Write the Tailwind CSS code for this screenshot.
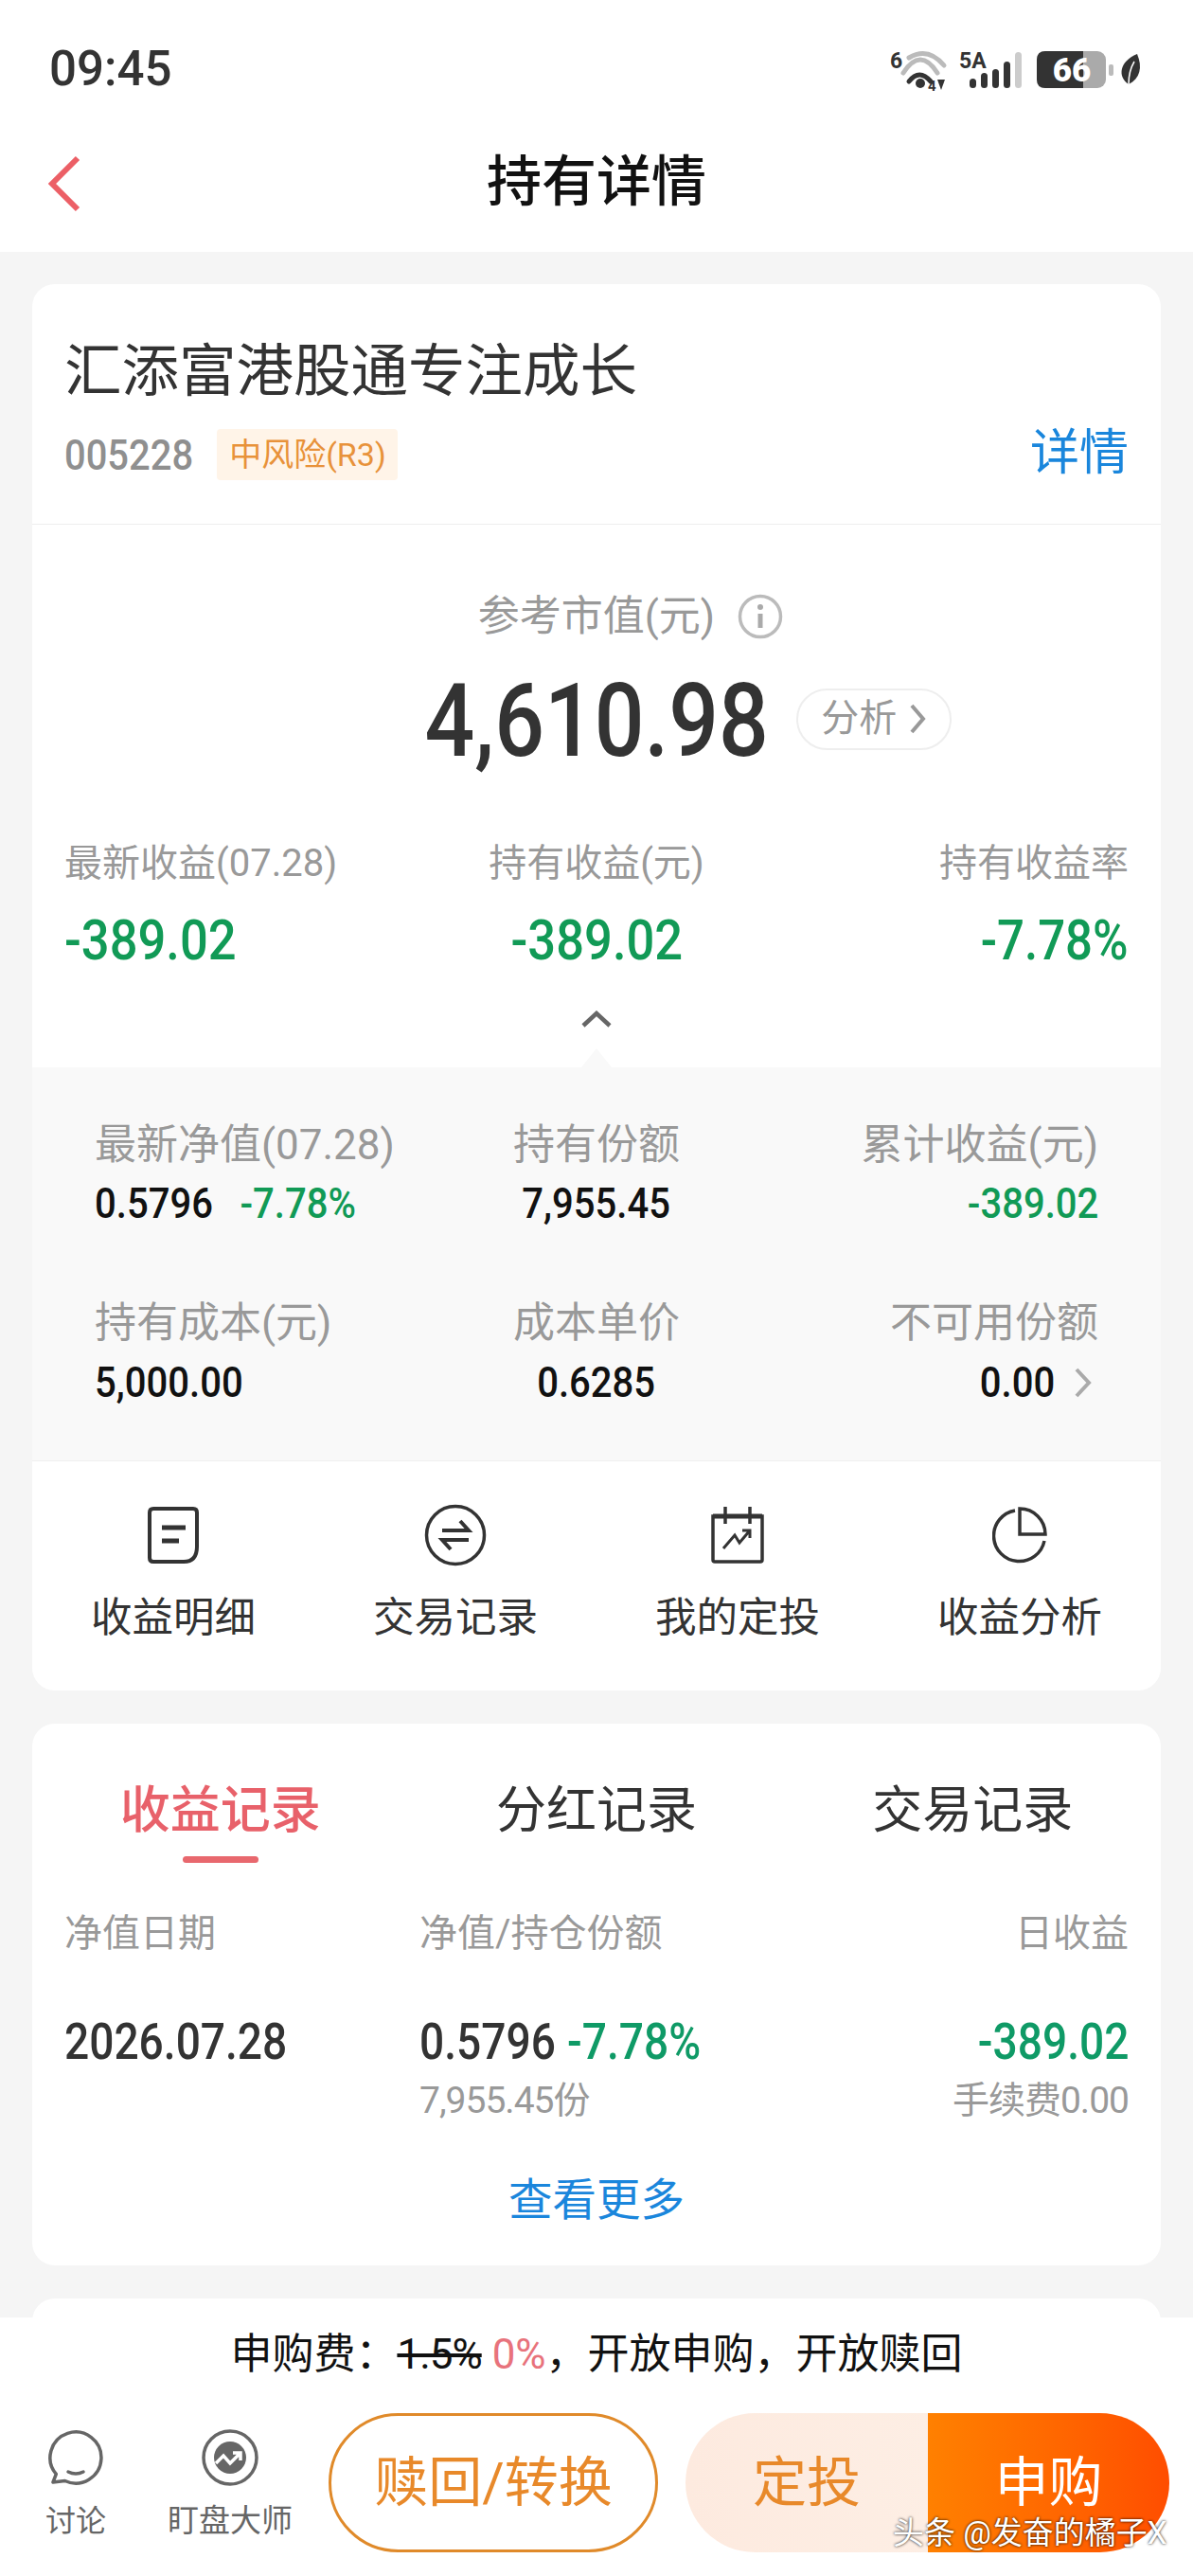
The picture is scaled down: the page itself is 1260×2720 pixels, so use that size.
<!DOCTYPE html>
<html lang="zh-CN">
<head>
    <meta charset="UTF-8">
    <meta name="viewport" content="width=device-width, initial-scale=1.0">
    <title>持有详情</title>
    <script src="https://cdn.jsdelivr.net/npm/@tailwindcss/browser@4"></script>
</head>
<body class="relative w-[1260px] h-[2720px] overflow-hidden bg-[#f5f5f5] font-['Roboto','Noto_Sans_CJK_SC',sans-serif]">

    <!-- status bar + nav -->
    <header class="bg-white pb-[26px]">
        <div class="h-[144px] pl-[52px] flex items-center justify-between">
            <span class="text-[51px] leading-none font-medium text-[#333]">09:45</span>
            <svg class="mr-[50px]" width="280" height="55" viewBox="0 0 280 55" fill="none">
                <text x="10" y="27" font-size="23" font-weight="700" fill="#333" font-family="Roboto">6</text>
                <path d="M30 16Q50 4 67 24" stroke="#bbb" stroke-width="5" stroke-linecap="round"/>
                <path d="M24 32Q42 4 60 32" stroke="#bbb" stroke-width="5" stroke-linecap="round"/>
                <path d="M30 41Q41 27 53 41" stroke="#333" stroke-width="5" stroke-linecap="round"/>
                <circle cx="42" cy="43" r="5" fill="#333"/>
                <text x="50" y="51" font-size="15" font-weight="700" fill="#333" font-family="Roboto">4</text>
                <path d="M60 39H68L64 50Z" fill="#333"/>
                <text x="83" y="27" font-size="23" font-weight="700" fill="#333" font-family="Roboto">5A</text>
                <rect x="94" y="38" width="7" height="10" rx="3.5" fill="#333"/>
                <rect x="106" y="32" width="7" height="16" rx="3.5" fill="#333"/>
                <rect x="118" y="28" width="7" height="20" rx="3.5" fill="#333"/>
                <rect x="130" y="20" width="7" height="28" rx="3.5" fill="#333"/>
                <rect x="142" y="10" width="7" height="38" rx="3.5" fill="#ccc"/>
                <rect x="165" y="9" width="73" height="39" rx="9" fill="#aaa"/>
                <path d="M174 9H214V48H174Q165 48 165 39V18Q165 9 174 9Z" fill="#333"/>
                <text x="202" y="41" text-anchor="middle" font-size="35" font-weight="900" fill="#fff" font-family="Roboto">66</text>
                <rect x="241" y="23" width="5" height="12" rx="2" fill="#bbb"/>
                <path d="M271 12C277 26 274 38 262 44C250 36 252 20 271 12Z" fill="#333"/>
                <path d="M262 44Q262 30 268 20" stroke="#fff" stroke-width="1.5"/>
            </svg>
        </div>
        <div class="relative h-[96px] flex items-center justify-center">
            <svg class="absolute left-[50px] top-[20px]" width="36" height="60" viewBox="0 0 36 60" fill="none">
                <path d="M32 3L5 30L32 57" stroke="#ec5f66" stroke-width="6"/>
            </svg>
            <h1 class="text-[58px] leading-none font-medium text-[#111]">持有详情</h1>
        </div>
    </header>

    <main class="px-[34px] pt-[34px] flex flex-col gap-[35px]">

        <!-- holding card -->
        <section class="bg-white rounded-[24px] overflow-hidden">
            <div class="h-[254px] px-[34px] pt-[63px] border-b border-[#eeeeee]">
                <h2 class="h-[60px] text-[60.5px] leading-[60px] text-[#333]">汇添富港股通专注成长</h2>
                <div class="mt-[30px] h-[54px] flex items-center">
                    <span class="text-[45px] leading-none font-medium text-[#8f8f8f] origin-left scale-x-[.887]">005228</span>
                    <span class="ml-[8px] w-[191px] h-[54px] flex items-center justify-center rounded-[4px] bg-[#fff4e8] text-[34px] text-[#e8923a]">中风险(R3)</span>
                    <span class="ml-auto -mt-[3px] text-[52px] leading-none text-[#1a86dc]">详情</span>
                </div>
            </div>

            <div class="h-[573px] px-[34px] pt-[72px]">
                <div class="h-[50px] grid grid-cols-[1fr_auto_1fr] items-center">
                    <span></span>
                    <span class="text-[44px] leading-none text-[#999]">参考市值(元)</span>
                    <svg class="ml-[24px]" width="48" height="48" viewBox="0 0 48 48" fill="none">
                        <circle cx="24" cy="24" r="21.5" stroke="#bbb" stroke-width="3.5"/>
                        <circle cx="24" cy="14" r="3" fill="#aaa"/>
                        <path d="M24 21V36" stroke="#aaa" stroke-width="5"/>
                    </svg>
                </div>
                <div class="mt-[31px] h-[100px] grid grid-cols-[1fr_auto_1fr] items-center">
                    <span></span>
                    <span class="text-[108px] leading-none font-medium text-[#333] scale-x-[.86]">4,610.98</span>
                    <span class="-mt-[4px] w-[164px] h-[65px] flex items-center justify-center gap-[12px] rounded-full border-2 border-[#eeeeee] text-[40px] text-[#999]">
                        分析
                        <svg width="20" height="36" viewBox="0 0 20 36" fill="none"><path d="M4 4L16 18L4 32" stroke="#999" stroke-width="4"/></svg>
                    </span>
                </div>
                <div class="mt-[80px] h-[50px] grid grid-cols-3 items-center text-[40px] leading-none text-[#999]">
                    <span class="whitespace-nowrap">最新收益(07.28)</span>
                    <span class="text-center">持有收益(元)</span>
                    <span class="text-right">持有收益率</span>
                </div>
                <div class="mt-[26px] h-[60px] grid grid-cols-3 items-center text-[60px] leading-none font-medium text-[#119a56]">
                    <span class="origin-left scale-x-[.875]">-389.02</span>
                    <span class="text-center scale-x-[.875]">-389.02</span>
                    <span class="text-right origin-right scale-x-[.85]">-7.78%</span>
                </div>
                <div class="mt-[44px] flex justify-center">
                    <svg width="34" height="18" viewBox="0 0 34 18" fill="none"><path d="M3 16L17 3L31 16" stroke="#666" stroke-width="4.5"/></svg>
                </div>
            </div>

            <div class="relative h-[415px] px-[66px] pt-[57px] bg-[#f9f9f9]">
                <div class="absolute left-[580px] -top-[20px] w-[32px] h-[20px] bg-[#f9f9f9] [clip-path:polygon(50%_0,100%_100%,0_100%)]"></div>
                <div class="h-[50px] grid grid-cols-3 items-center text-[44px] leading-none text-[#999]">
                    <span class="whitespace-nowrap">最新净值(07.28)</span>
                    <span class="text-center">持有份额</span>
                    <span class="text-right">累计收益(元)</span>
                </div>
                <div class="mt-[14px] h-[44px] grid grid-cols-3 items-center text-[45px] leading-none font-medium text-[#111]">
                    <span class="whitespace-nowrap origin-left scale-x-[.89]">0.5796<span class="ml-[32px] text-[#119a56]">-7.78%</span></span>
                    <span class="text-center scale-x-[.89]">7,955.45</span>
                    <span class="text-right origin-right scale-x-[.89] text-[#119a56]">-389.02</span>
                </div>
                <div class="mt-[80px] h-[50px] grid grid-cols-3 items-center text-[44px] leading-none text-[#999]">
                    <span>持有成本(元)</span>
                    <span class="text-center">成本单价</span>
                    <span class="text-right">不可用份额</span>
                </div>
                <div class="mt-[15px] h-[44px] grid grid-cols-3 items-center text-[45px] leading-none font-medium text-[#111]">
                    <span class="origin-left scale-x-[.89]">5,000.00</span>
                    <span class="text-center scale-x-[.89]">0.6285</span>
                    <span class="flex items-center justify-end">
                        <span class="origin-right scale-x-[.89]">0.00</span>
                        <svg class="ml-[20px] mr-[6px]" width="20" height="34" viewBox="0 0 20 34" fill="none"><path d="M3 3L16 17L3 31" stroke="#aaa" stroke-width="4"/></svg>
                    </span>
                </div>
            </div>

            <div class="h-[243px] pt-[45px] grid grid-cols-4 border-t border-[#f0f0f0]">
                <div class="flex flex-col items-center">
                    <div class="h-[66px] flex items-center">
                        <svg width="54" height="60" viewBox="0 0 54 60" fill="none" stroke="#333" stroke-width="4">
                            <path d="M2 6Q2 2 6 2H48Q52 2 52 6V42Q52 58 38 58H6Q2 58 2 54Z"/>
                            <path d="M15 22H40M15 36H33" stroke-width="5"/>
                        </svg>
                    </div>
                    <span class="mt-[30px] h-[50px] text-[43.5px] leading-[50px] text-[#333]">收益明细</span>
                </div>
                <div class="flex flex-col items-center">
                    <div class="h-[66px] flex items-center">
                        <svg width="66" height="66" viewBox="0 0 66 66" fill="none" stroke="#333" stroke-width="3.5">
                            <circle cx="33" cy="33" r="30.5"/>
                            <path d="M19 28H47L38 18M47 38H19L28 48" stroke-width="4"/>
                        </svg>
                    </div>
                    <span class="mt-[30px] h-[50px] text-[43.5px] leading-[50px] text-[#333]">交易记录</span>
                </div>
                <div class="flex flex-col items-center">
                    <div class="h-[66px] flex items-center">
                        <svg width="58" height="60" viewBox="0 0 58 60" fill="none" stroke="#333" stroke-width="3.5">
                            <path d="M3 10H55V56Q55 58 53 58H5Q3 58 3 56Z"/>
                            <path d="M3 10H55" stroke-width="5"/>
                            <path d="M16 0V18M42 0V18"/>
                            <path d="M14 44L26 30L31 38L42 25M34 25H42V33" stroke-width="3"/>
                        </svg>
                    </div>
                    <span class="mt-[30px] h-[50px] text-[43.5px] leading-[50px] text-[#333]">我的定投</span>
                </div>
                <div class="flex flex-col items-center">
                    <div class="h-[66px] flex items-center">
                        <svg width="58" height="60" viewBox="0 0 58 60" fill="none" stroke="#333" stroke-width="3.5">
                            <path d="M24 4A27 27 0 1 0 55 36"/>
                            <path d="M29 2A27 27 0 0 1 56 29H29Z"/>
                        </svg>
                    </div>
                    <span class="mt-[30px] h-[50px] text-[43.5px] leading-[50px] text-[#333]">收益分析</span>
                </div>
            </div>
        </section>

        <!-- records card -->
        <section class="bg-white rounded-[24px] h-[572px] pt-[62px]">
            <div class="grid grid-cols-3">
                <div class="flex flex-col items-center">
                    <span class="h-[60px] text-[53px] leading-[60px] font-medium text-[#e8616a]">收益记录</span>
                    <span class="mt-[18px] w-[80px] h-[7px] rounded-full bg-[#e8686e]"></span>
                </div>
                <span class="h-[60px] text-center text-[53px] leading-[60px] text-[#333]">分红记录</span>
                <span class="h-[60px] text-center text-[53px] leading-[60px] text-[#333]">交易记录</span>
            </div>
            <div class="mt-[50px] px-[34px] h-[50px] grid grid-cols-[375px_1fr_auto] items-center text-[40px] leading-none text-[#999]">
                <span>净值日期</span>
                <span>净值/持仓份额</span>
                <span class="text-right">日收益</span>
            </div>
            <div class="mt-[59px] px-[34px] h-[60px] grid grid-cols-[375px_1fr_auto] items-center text-[53px] leading-none font-medium text-[#333]">
                <span class="origin-left scale-x-[.87]">2026.07.28</span>
                <span class="whitespace-nowrap origin-left scale-x-[.87]">0.5796<span class="ml-[14px] text-[#0f9a66]">-7.78%</span></span>
                <span class="text-right origin-right scale-x-[.87] text-[#0f9a66]">-389.02</span>
            </div>
            <div class="mt-[10px] px-[34px] h-[44px] grid grid-cols-[375px_1fr_auto] items-center text-[39px] leading-none text-[#999] tracking-[-1px]">
                <span></span>
                <span>7,955.45份</span>
                <span class="text-right">手续费0.00</span>
            </div>
            <div class="mt-[53px] h-[60px] text-center text-[46.5px] leading-[60px] text-[#1a86dc]">查看更多</div>
        </section>

        <!-- next card, cut off by the bottom bar -->
        <section class="bg-white rounded-[24px] h-[300px]"></section>
    </main>

    <!-- bottom bar -->
    <footer class="absolute left-0 right-0 top-[2447px] h-[273px] bg-white pt-[9px]">
        <p class="h-[60px] text-center text-[44px] leading-[60px] text-[#111] whitespace-nowrap">申购费：<span class="line-through tracking-[-1px]">1.5%</span> <span class="text-[#e8737c]">0%</span>，开放申购，开放赎回</p>
        <div class="mt-[32px] h-[147px] flex">
            <div class="w-[160px] pt-[17px] flex flex-col items-center">
                <svg width="60" height="60" viewBox="0 0 60 60" fill="none" stroke="#666" stroke-width="3.5" stroke-linejoin="round">
                    <path d="M18.6 54.5A27 27 0 1 0 9.3 47.4L6 56Z"/>
                    <path d="M22 45Q30 49 38 45" stroke-linecap="round"/>
                </svg>
                <span class="mt-[17px] h-[40px] text-[32px] leading-[40px] text-[#666]">讨论</span>
            </div>
            <div class="w-[166px] pt-[17px] flex flex-col items-center">
                <svg width="60" height="60" viewBox="0 0 60 60" fill="none">
                    <circle cx="30" cy="30" r="28" stroke="#666" stroke-width="3.5"/>
                    <circle cx="30" cy="30" r="17" fill="#666"/>
                    <path d="M15 36L23 28L30 36L40 26M33 25H41V33" stroke="#fff" stroke-width="3.5"/>
                </svg>
                <span class="mt-[17px] h-[40px] text-[33px] leading-[40px] text-[#666]">盯盘大师</span>
            </div>
            <button class="ml-[21px] w-[348px] h-[147px] rounded-[74px] border-[3px] border-[#e08a2a] text-[57px] text-[#e8892a]">赎回/转换</button>
            <button class="ml-[29px] w-[256px] h-[147px] rounded-l-[74px] bg-linear-to-r from-[#fdeadf] to-[#fdeee4] text-[57px] text-[#e8892a]">定投</button>
            <button class="w-[255px] h-[147px] rounded-r-[74px] bg-linear-to-r from-[#ff8000] to-[#ff4d00] text-[57px] text-white">申购</button>
        </div>
    </footer>

    <!-- watermark over the page -->
    <div class="absolute left-[943px] top-[2655px] h-[40px] text-[33px] leading-[40px] text-white whitespace-nowrap [text-shadow:0_0_3px_#000]">头条 @发奋的橘子X</div>
</body>
</html>
